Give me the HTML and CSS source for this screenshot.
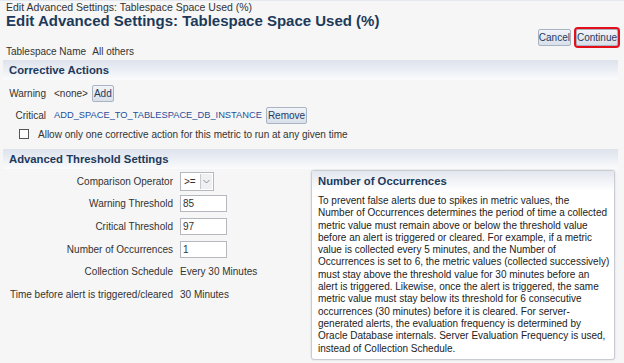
FILE: index.html
```html
<!DOCTYPE html>
<html lang="en">
<head>
    <meta charset="UTF-8">
    <title>Edit Advanced Settings: Tablespace Space Used (%)</title>
    <link rel="stylesheet" href="styles.css">
</head>
<body>
    <div class="page">
        <div class="crumb">Edit Advanced Settings: Tablespace Space Used (%)</div>
        <h1 class="title">Edit Advanced Settings: Tablespace Space Used (%)</h1>
        <div class="toolbar">
            <button class="btn">Cancel</button>
            <button class="btn btn-focus">Continue</button>
        </div>
        <div class="info">
            <span class="label">Tablespace Name</span>
            <span class="value">All others</span>
        </div>

        <div class="band">Corrective Actions</div>
        <div class="actions">
            <div class="act-row">
                <span class="act-label">Warning</span>
                <span class="act-value">&lt;none&gt;</span>
                <button class="btn">Add</button>
            </div>
            <div class="act-row">
                <span class="act-label">Critical</span>
                <a class="link" href="javascript:void(0);">ADD_SPACE_TO_TABLESPACE_DB_INSTANCE</a>
                <button class="btn">Remove</button>
            </div>
            <label class="check-row">
                <span class="checkbox"></span>
                Allow only one corrective action for this metric to run at any given time
            </label>
        </div>

        <div class="band">Advanced Threshold Settings</div>
        <div class="threshold">
            <div class="form">
                <span class="f-label">Comparison Operator</span>
                <span class="f-value">
                    <span class="select"><span class="select-text">&gt;=</span><span class="select-arrow">
                        <svg width="7" height="5" viewBox="0 0 7 5"><path d="M0.5 1 L3.5 4 L6.5 1" fill="none" stroke="#8a8f97" stroke-width="1"/></svg>
                    </span></span>
                </span>
                <span class="f-label">Warning Threshold</span>
                <span class="f-value"><span class="input">85</span></span>
                <span class="f-label">Critical Threshold</span>
                <span class="f-value"><span class="input">97</span></span>
                <span class="f-label">Number of Occurrences</span>
                <span class="f-value"><span class="input">1</span></span>
                <span class="f-label">Collection Schedule</span>
                <span class="f-value">Every 30 Minutes</span>
                <span class="f-label">Time before alert is triggered/cleared</span>
                <span class="f-value">30 Minutes</span>
            </div>
            <div class="help">
                <div class="help-head">Number of Occurrences</div>
                <p class="help-body">To prevent false alerts due to spikes in metric values, the<br>
                Number of Occurrences determines the period of time a collected<br>
                metric value must remain above or below the threshold value<br>
                before an alert is triggered or cleared. For example, if a metric<br>
                value is collected every 5 minutes, and the Number of<br>
                Occurrences is set to 6, the metric values (collected successively)<br>
                must stay above the threshold value for 30 minutes before an<br>
                alert is triggered. Likewise, once the alert is triggered, the same<br>
                metric value must stay below its threshold for 6 consecutive<br>
                occurrences (30 minutes) before it is cleared. For server-<br>
                generated alerts, the evaluation frequency is determined by<br>
                Oracle Database internals. Server Evaluation Frequency is used,<br>
                instead of Collection Schedule.</p>
            </div>
        </div>
    </div>
</body>
</html>
```

FILE: styles.css
```css
html {
    overflow: hidden;
}

body {
    margin: 0;
    padding: 0;
    background-color: #f6f6f6;
    font-family: "Liberation Sans", Arial, sans-serif;
    font-size: 10px;
    color: #333;
    height: 363px;
    box-sizing: border-box;
    overflow: hidden;
    border-top: 1px solid #e6e9ed;
}

.page {
    padding: 0 6px 0 3px;
}

.crumb {
    padding-left: 3px;
    font-size: 10.5px;
    line-height: 12px;
    color: #333;
}

.title {
    margin: 0;
    padding-left: 3px;
    font-size: 15px;
    line-height: 16px;
    font-weight: bold;
    color: #1d3a5a;
}

.toolbar {
    display: flex;
    justify-content: flex-end;
    align-items: center;
    gap: 5px;
    margin-top: -1px;
    height: 18px;
}

.btn {
    font-family: inherit;
    font-size: 10px;
    color: #1e3a62;
    background: linear-gradient(#f1f4f8, #d9e0ea);
    border: 1px solid #aab3c1;
    border-radius: 2px;
    height: 17px;
    padding: 0 1px;
    line-height: 15px;
}

.toolbar .btn {
    padding: 0;
}

.btn-focus {
    outline: 2px solid #e3101c;
    outline-offset: 0;
}

.info {
    padding-left: 3px;
    height: 12px;
    line-height: 12px;
}

.info .label {
    margin-right: 4px;
}

.band {
    margin-top: 2px;
    height: 20px;
    line-height: 21px;
    padding-left: 6px;
    font-size: 11.3px;
    font-weight: bold;
    color: #1d3a5a;
    background: linear-gradient(#dde2ec, #eef1f6 60%, #fafbfc);
}

.actions {
    padding: 2px 0 5px 6px;
}

.act-row {
    display: flex;
    align-items: center;
    gap: 8px;
    height: 22px;
}

.act-row .btn {
    margin-left: -4px;
}

.act-label {
    width: 37px;
    text-align: right;
}

.link {
    color: #1f4f9c;
    font-size: 9.3px;
    text-decoration: none;
}

.check-row {
    display: flex;
    align-items: center;
    gap: 9px;
    padding-left: 10px;
    height: 16px;
}

.checkbox {
    width: 8px;
    height: 8px;
    border: 1px solid #555;
    background: #fff;
}

.threshold {
    display: flex;
    align-items: flex-start;
}

.form {
    flex: none;
    width: 308px;
    display: grid;
    grid-template-columns: 164px auto;
    grid-auto-rows: 22.6px;
    column-gap: 7px;
    align-items: center;
    padding-top: 1px;
    padding-left: 6px;
    box-sizing: border-box;
}

.f-label {
    text-align: right;
    white-space: nowrap;
}

.select {
    display: inline-flex;
    align-items: center;
    height: 19px;
    width: 34px;
    border: 1px solid #b5b9bf;
    background: #fff;
    box-sizing: border-box;
}

.select-text {
    flex: 1;
    padding-left: 3px;
}

.select-arrow {
    width: 11px;
    height: 15px;
    margin-right: 1px;
    border-left: 1px solid #c6c9ce;
    background: #eef0f2;
    display: flex;
    align-items: center;
    justify-content: center;
}

.input {
    display: inline-block;
    width: 47px;
    height: 17px;
    line-height: 16px;
    padding-left: 2px;
    border: 1px solid #b5b9bf;
    background: #fff;
    box-sizing: border-box;
}

.help {
    flex: none;
    margin-top: 1px;
    width: 304px;
    height: 190px;
    box-sizing: border-box;
    background: #fff;
    border: 1px solid #c9ccd4;
    border-radius: 3px;
    box-shadow: 0 0 2px rgba(0, 0, 0, 0.15);
}

.help-head {
    height: 20px;
    line-height: 20px;
    padding-left: 6px;
    font-size: 11.3px;
    font-weight: bold;
    color: #1d3a5a;
    background: linear-gradient(#e2e6ee, #ffffff);
}

.help-body {
    margin: 4px 0 0 0;
    padding: 0 2px 0 6px;
    font-size: 10px;
    line-height: 12.3px;
    white-space: nowrap;
    color: #222;
}
```
